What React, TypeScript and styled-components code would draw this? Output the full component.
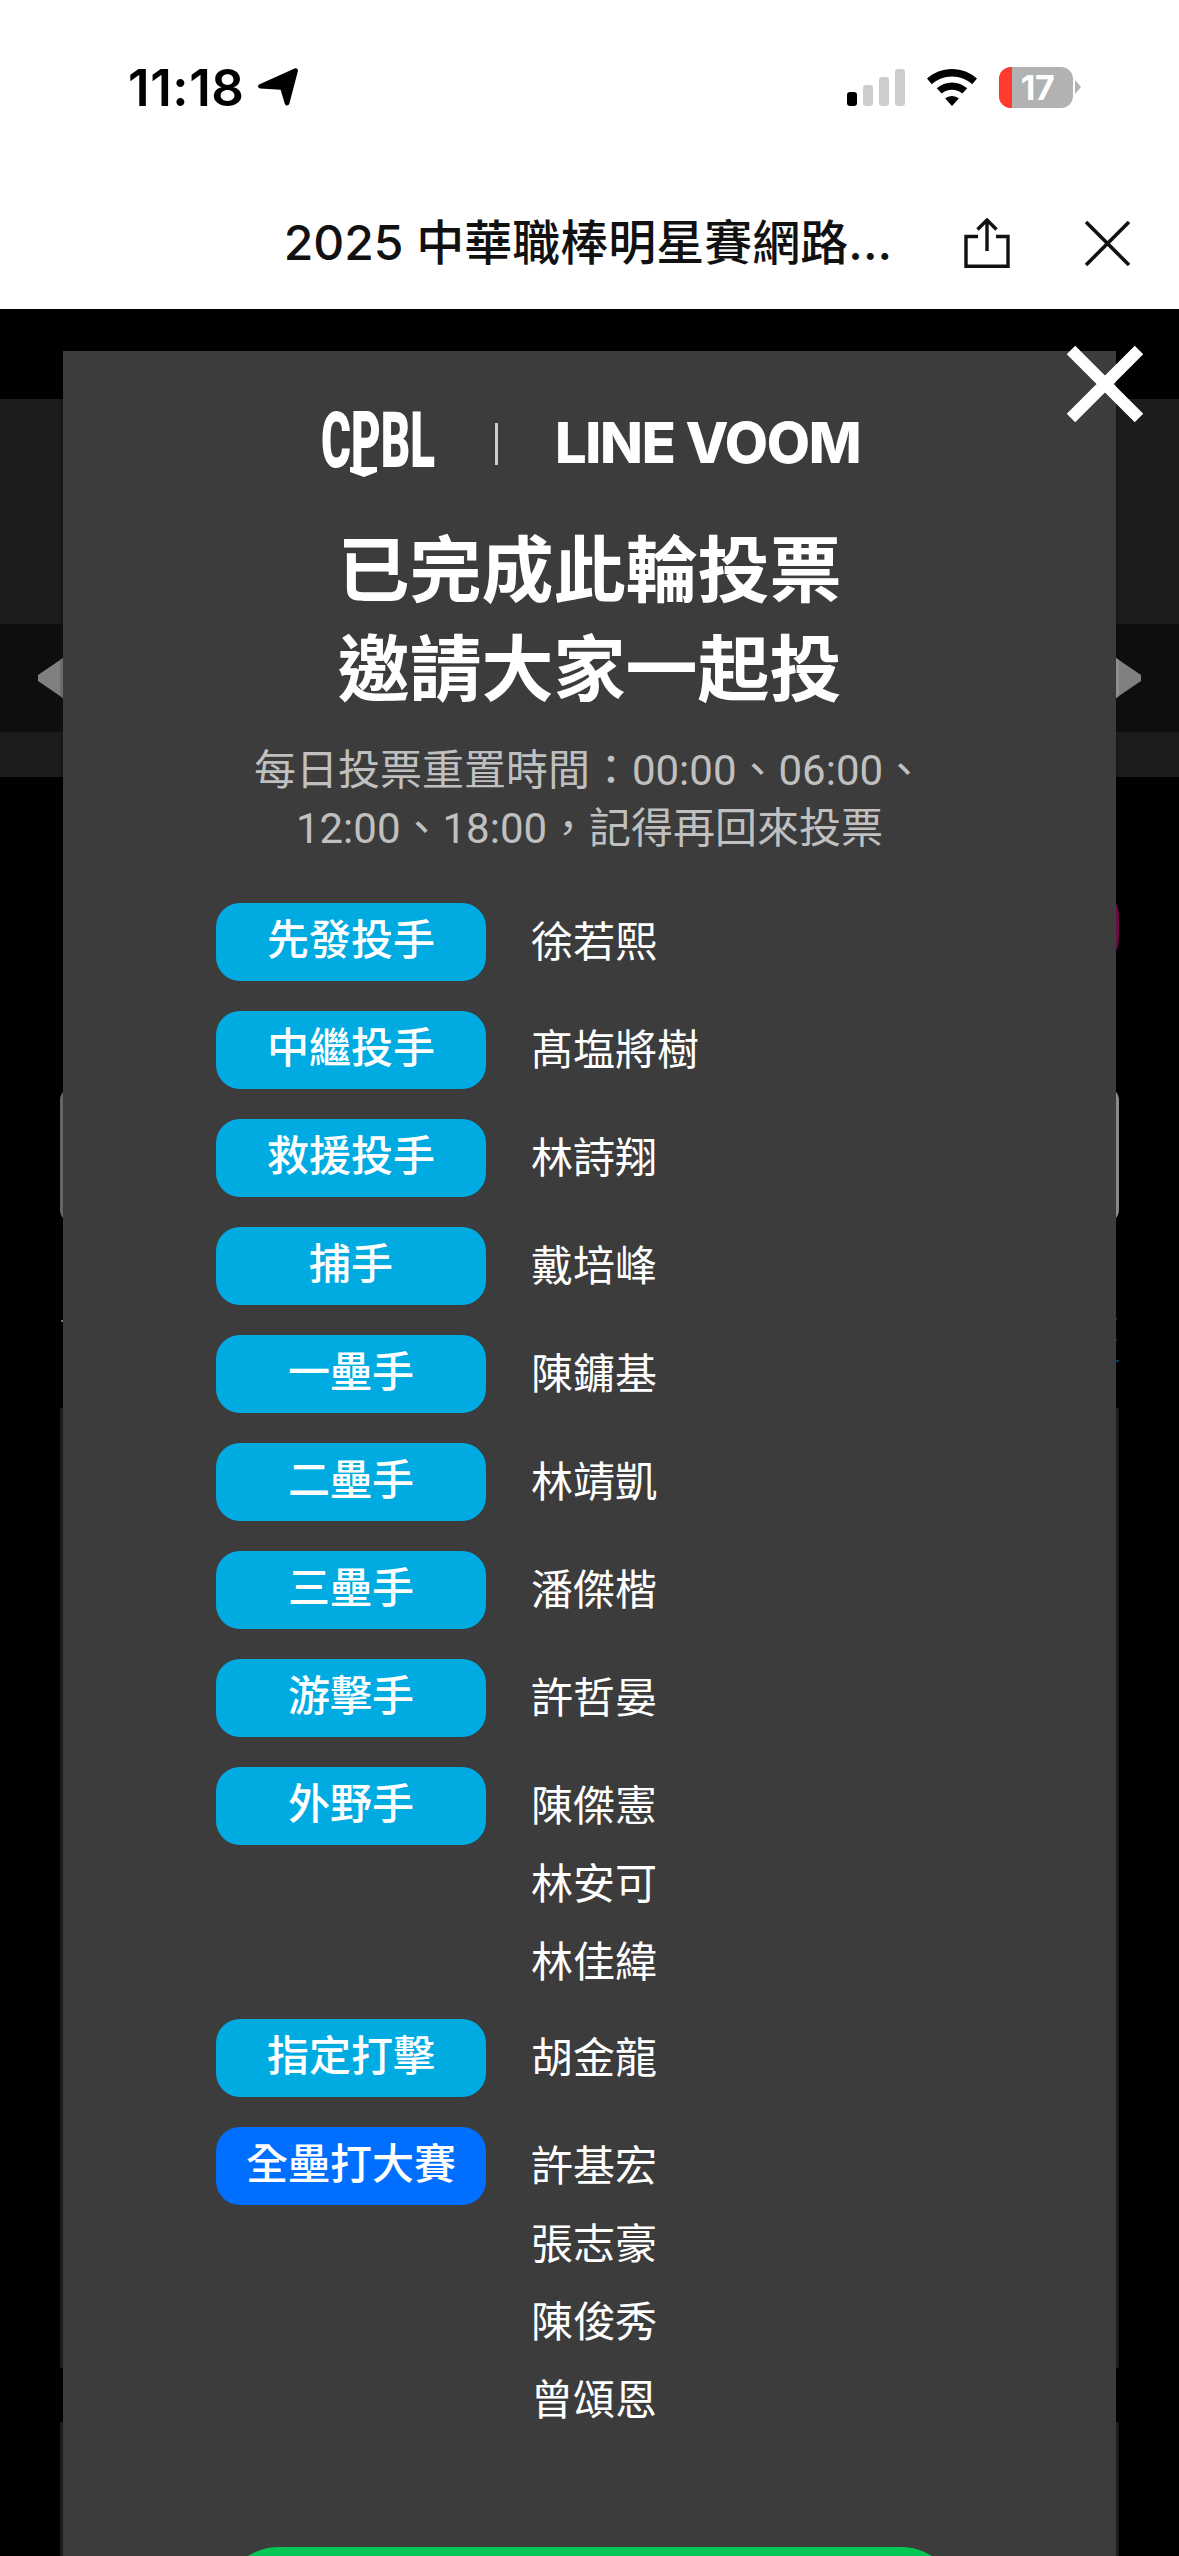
import React from "react";
import styled, { createGlobalStyle } from "styled-components";

const CJK = `"Noto Sans CJK TC", "Noto Sans CJK SC", sans-serif`;

const Global = createGlobalStyle`
  html, body { margin: 0; padding: 0; background: #000; }
  body { width: 1179px; height: 2556px; overflow: hidden; font-family: Roboto, ${CJK}; }
  * { box-sizing: border-box; }
`;

const Screen = styled.div`
  width: 1179px;
  height: 2556px;
  display: flex;
  flex-direction: column;
  overflow: hidden;
`;

const Chrome = styled.header`
  height: 309px;
  background: #fff;
  display: flex;
  flex-direction: column;
`;

const StatusRow = styled.div`
  height: 174px;
  padding: 0 98px 0 128px;
  display: flex;
  align-items: center;
  justify-content: space-between;
`;

const TimeGroup = styled.div`
  display: flex;
  align-items: center;
  gap: 13px;
`;

const Time = styled.span`
  font: 600 51px/1 Inter, sans-serif;
  letter-spacing: 0.6px;
  color: #000;
`;

const StatusIcons = styled.div`
  display: flex;
  align-items: center;
  gap: 22px;
`;

const Bars = styled.div`
  display: flex;
  align-items: flex-end;
  gap: 6px;
  height: 37px;
`;

const Bar = styled.span<{ $h: number; $on?: boolean }>`
  width: 10px;
  height: ${(p) => p.$h}px;
  border-radius: 3px;
  background: ${(p) => (p.$on ? "#000" : "#cdcdcd")};
`;

const Battery = styled.div`
  display: flex;
  align-items: center;
  gap: 2px;
`;

const BatteryBody = styled.div`
  width: 74px;
  height: 41px;
  border-radius: 12px;
  overflow: hidden;
  background: #b2b2b2;
  display: flex;
`;

const BatteryFill = styled.span`
  width: 13px;
  background: #ff3b30;
`;

const BatteryText = styled.span`
  flex: 1;
  padding-right: 10px;
  text-align: center;
  font: 700 34px/41px Inter, sans-serif;
  letter-spacing: -0.5px;
  color: #fff;
`;

const BatteryNub = styled.span`
  width: 6px;
  height: 14px;
  background: #b2b2b2;
  clip-path: polygon(0 0, 100% 50%, 0 100%);
`;

const NavRow = styled.div`
  height: 135px;
  padding: 3px 49px 0 0;
  display: flex;
  align-items: center;
  justify-content: flex-end;
`;

const NavTitle = styled.div`
  font: 500 48px/1 Inter, ${CJK};
  color: #111;
  margin-right: 72px;
  white-space: nowrap;
`;

const NavIcons = styled.div`
  display: flex;
  align-items: center;
  gap: 75px;
`;

const Stage = styled.main`
  position: relative;
  flex: 1;
  background: #000;
  overflow: hidden;
`;

const Backdrop = styled.div`
  padding-top: 90px;
  display: flex;
  flex-direction: column;
`;

const Band = styled.div<{ $h: number; $bg: string }>`
  height: ${(p) => p.$h}px;
  background: ${(p) => p.$bg};
`;

const HeroShade = styled.div`
  height: 100%;
  margin: 0 60px;
  background: #181818;
`;

const FootShade = styled(HeroShade)``;

const ArrowBand = styled(Band)`
  padding: 0 38px;
  display: flex;
  align-items: center;
  justify-content: space-between;
`;

const Peek = styled.div`
  margin: 0 60px;
  display: flex;
  flex-direction: column;
`;

const DotRow = styled.div`
  margin-top: 127px;
  height: 46px;
  display: flex;
  justify-content: flex-end;
`;

const DotEdge = styled.span`
  width: 3px;
  border-radius: 0 3px 3px 0 / 0 16px 16px 0;
  background: #6b0d45;
`;

const CardEdge = styled.div`
  margin-top: 138px;
  height: 134px;
  border-radius: 12px;
  border-left: 3px solid #666;
  border-right: 3px solid #8a8a8a;
`;

const TickRow = styled.div`
  margin-top: 96px;
  height: 44px;
  display: flex;
  justify-content: space-between;
`;

const LeftTick = styled.span`
  width: 2px;
  height: 2px;
  margin: 2px 0 0 1px;
  background: #777;
`;

const TealTicks = styled.div`
  width: 3px;
  display: flex;
  flex-direction: column;
  justify-content: space-between;
  align-items: flex-start;
`;

const TealTick = styled.span<{ $w: number }>`
  width: ${(p) => p.$w}px;
  height: 2px;
  background: #0b3a4d;
`;

const LowerPanel = styled.div<{ $gap: number; $h: number }>`
  margin-top: ${(p) => p.$gap}px;
  height: ${(p) => p.$h}px;
  background: #1c1c1c;
`;

const Modal = styled.section`
  position: absolute;
  top: 42px;
  left: 63px;
  width: 1053px;
  height: 2300px;
  padding-top: 60px;
  background: #3c3c3c;
  display: flex;
  flex-direction: column;
  align-items: center;
`;

const CloseButton = styled.button`
  position: absolute;
  top: -6px;
  right: -28px;
  width: 78px;
  height: 78px;
  padding: 0;
  border: 0;
  background: none;
  display: block;
`;

const LogoRow = styled.div`
  width: 100%;
  height: 66px;
  padding-left: 258px;
  display: flex;
  align-items: flex-start;
`;

const LogoBox = styled.svg`
  display: block;
  overflow: visible;
`;

const Divider = styled.span`
  width: 3px;
  height: 42px;
  margin: 12px 57px 0 60px;
  background: #ccc;
`;

const Voom = styled.span`
  margin-top: 7px;
  font: 800 56px/50px Inter, sans-serif;
  letter-spacing: -1.3px;
  color: #fff;
  white-space: nowrap;
`;

const Title = styled.h1`
  margin: 38px 0 0;
  font: 700 72px/99px ${CJK};
  color: #fff;
  text-align: center;
`;

const Subtitle = styled.p`
  margin: 29px 0 0;
  font: 400 42px/57.6px Roboto, ${CJK};
  color: #c0c0c0;
  text-align: center;
`;

const List = styled.div`
  width: 100%;
  margin-top: 46px;
  padding-left: 153px;
  display: flex;
  flex-direction: column;
`;

const Row = styled.div`
  display: flex;
  align-items: flex-start;
  gap: 45px;
`;

const Pill = styled.div<{ $hot?: boolean }>`
  width: 270px;
  height: 78px;
  margin-bottom: 30px;
  padding-bottom: 8px;
  border-radius: 24px;
  background: ${(p) => (p.$hot ? "#006fff" : "#00abe2")};
  color: #fff;
  font: 500 42px/68px ${CJK};
  text-align: center;
`;

const Names = styled.div`
  padding-bottom: 18px;
  display: flex;
  flex-direction: column;
`;

const Name = styled.div`
  height: 78px;
  font: 400 42px/71px ${CJK};
  color: #fff;
`;

const ShareCta = styled.button`
  width: 738px;
  height: 116px;
  margin-top: 90px;
  border: 0;
  border-radius: 58px;
  background: #06c755;
  flex-shrink: 0;
`;

const CpblLogo = () => (
  <LogoBox width="114" height="66" viewBox="0 0 114 66" fill="#fff">
    <text
      x="0"
      y="56"
      fontFamily="Roboto, sans-serif"
      fontWeight="900"
      fontSize="78"
      textLength="114"
      lengthAdjust="spacingAndGlyphs"
    >
      CPBL
    </text>
    <polygon points="29,56 56,56 56,61 43,66 29,61" />
  </LogoBox>
);

const LocationArrow = () => (
  <svg width="40" height="38" viewBox="0 0 40 38" fill="#000">
    <path d="M36.6 0.6 C38.6 -0.4 40.4 1.2 39.8 3.4 L31.4 35.6 C30.8 38 27.6 38.4 26.8 35.8 L22.6 21.8 L2.4 20.4 C-0.2 20.1 -0.8 17.2 1.6 16.2 Z" />
  </svg>
);

const Wifi = () => (
  <svg width="50" height="37" viewBox="0 0 50 37" fill="#000">
    <path d="M25 0 C34.6 0 43.4 3.6 50 9.6 L45.2 15.2 C39.8 10.4 32.8 7.4 25 7.4 C17.2 7.4 10.2 10.4 4.8 15.2 L0 9.6 C6.6 3.6 15.4 0 25 0 Z" />
    <path d="M25 13.4 C30.8 13.4 36.2 15.6 40.2 19.2 L35.4 24.6 C32.6 22.2 29 20.8 25 20.8 C21 20.8 17.4 22.2 14.6 24.6 L9.8 19.2 C13.8 15.6 19.2 13.4 25 13.4 Z" />
    <path d="M25 27 C27.6 27 30 27.9 31.8 29.4 L25 37 L18.2 29.4 C20 27.9 22.4 27 25 27 Z" />
  </svg>
);

const ShareIcon = () => (
  <svg width="46" height="50" viewBox="0 0 46 50" fill="none" stroke="#111" strokeWidth="3.4">
    <path d="M23 2 V33 M13.5 11.5 L23 2 L32.5 11.5" />
    <path d="M14 18.5 H2 V48.3 H44 V18.5 H32" />
  </svg>
);

const ThinClose = () => (
  <svg width="45" height="45" viewBox="0 0 45 45" stroke="#111" strokeWidth="3.6">
    <path d="M1 1 L44 44 M44 1 L1 44" />
  </svg>
);

const BoldClose = () => (
  <svg width="78" height="78" viewBox="0 0 78 78" stroke="#fff" strokeWidth="12">
    <path d="M5 5 L73 73 M73 5 L5 73" />
  </svg>
);

const LeftArrow = () => (
  <svg width="25" height="40" viewBox="0 0 25 40">
    <polygon points="0,17 25,0 25,40 0,23" fill="#808080" />
    <polygon points="22,2 25,0 25,40 22,38" fill="#6c6c6c" />
  </svg>
);

const RightArrow = () => (
  <svg width="25" height="40" viewBox="0 0 25 40">
    <polygon points="0,0 25,17 25,23 0,40" fill="#808080" />
    <polygon points="0,0 3,2 3,38 0,40" fill="#8e8e8e" />
  </svg>
);

type Entry = { role: string; names: string[]; hot?: boolean };

const entries: Entry[] = [
  { role: "先發投手", names: ["徐若熙"] },
  { role: "中繼投手", names: ["髙塩將樹"] },
  { role: "救援投手", names: ["林詩翔"] },
  { role: "捕手", names: ["戴培峰"] },
  { role: "一壘手", names: ["陳鏞基"] },
  { role: "二壘手", names: ["林靖凱"] },
  { role: "三壘手", names: ["潘傑楷"] },
  { role: "游擊手", names: ["許哲晏"] },
  { role: "外野手", names: ["陳傑憲", "林安可", "林佳緯"] },
  { role: "指定打擊", names: ["胡金龍"] },
  { role: "全壘打大賽", names: ["許基宏", "張志豪", "陳俊秀", "曾頌恩"], hot: true },
];

export default function App() {
  return (
    <Screen>
      <Global />
      <Chrome>
        <StatusRow>
          <TimeGroup>
            <Time>11:18</Time>
            <LocationArrow />
          </TimeGroup>
          <StatusIcons>
            <Bars>
              <Bar $h={14} $on />
              <Bar $h={21} />
              <Bar $h={29} />
              <Bar $h={37} />
            </Bars>
            <Wifi />
            <Battery>
              <BatteryBody>
                <BatteryFill />
                <BatteryText>17</BatteryText>
              </BatteryBody>
              <BatteryNub />
            </Battery>
          </StatusIcons>
        </StatusRow>
        <NavRow>
          <NavTitle>2025 中華職棒明星賽網路...</NavTitle>
          <NavIcons>
            <ShareIcon />
            <ThinClose />
          </NavIcons>
        </NavRow>
      </Chrome>
      <Stage>
        <Backdrop>
          <Band $h={225} $bg="#1c1c1c">
            <HeroShade />
          </Band>
          <ArrowBand $h={108} $bg="#0e0e0e">
            <LeftArrow />
            <RightArrow />
          </ArrowBand>
          <Band $h={45} $bg="#1c1c1c">
            <FootShade />
          </Band>
          <Peek>
            <DotRow>
              <DotEdge />
            </DotRow>
            <CardEdge />
            <TickRow>
              <LeftTick />
              <TealTicks>
                <TealTick $w={1} />
                <TealTick $w={1} />
                <TealTick $w={3} />
              </TealTicks>
            </TickRow>
            <LowerPanel $gap={46} $h={960} />
            <LowerPanel $gap={54} $h={200} />
          </Peek>
        </Backdrop>
        <Modal>
          <CloseButton aria-label="關閉">
            <BoldClose />
          </CloseButton>
          <LogoRow>
            <CpblLogo />
            <Divider />
            <Voom>LINE VOOM</Voom>
          </LogoRow>
          <Title>
            已完成此輪投票
            <br />
            邀請大家一起投
          </Title>
          <Subtitle>
            每日投票重置時間：00:00、06:00、
            <br />
            12:00、18:00，記得再回來投票
          </Subtitle>
          <List>
            {entries.map((e) => (
              <Row key={e.role}>
                <Pill $hot={e.hot}>{e.role}</Pill>
                <Names>
                  {e.names.map((n) => (
                    <Name key={n}>{n}</Name>
                  ))}
                </Names>
              </Row>
            ))}
          </List>
          <ShareCta aria-label="分享" />
        </Modal>
      </Stage>
    </Screen>
  );
}
